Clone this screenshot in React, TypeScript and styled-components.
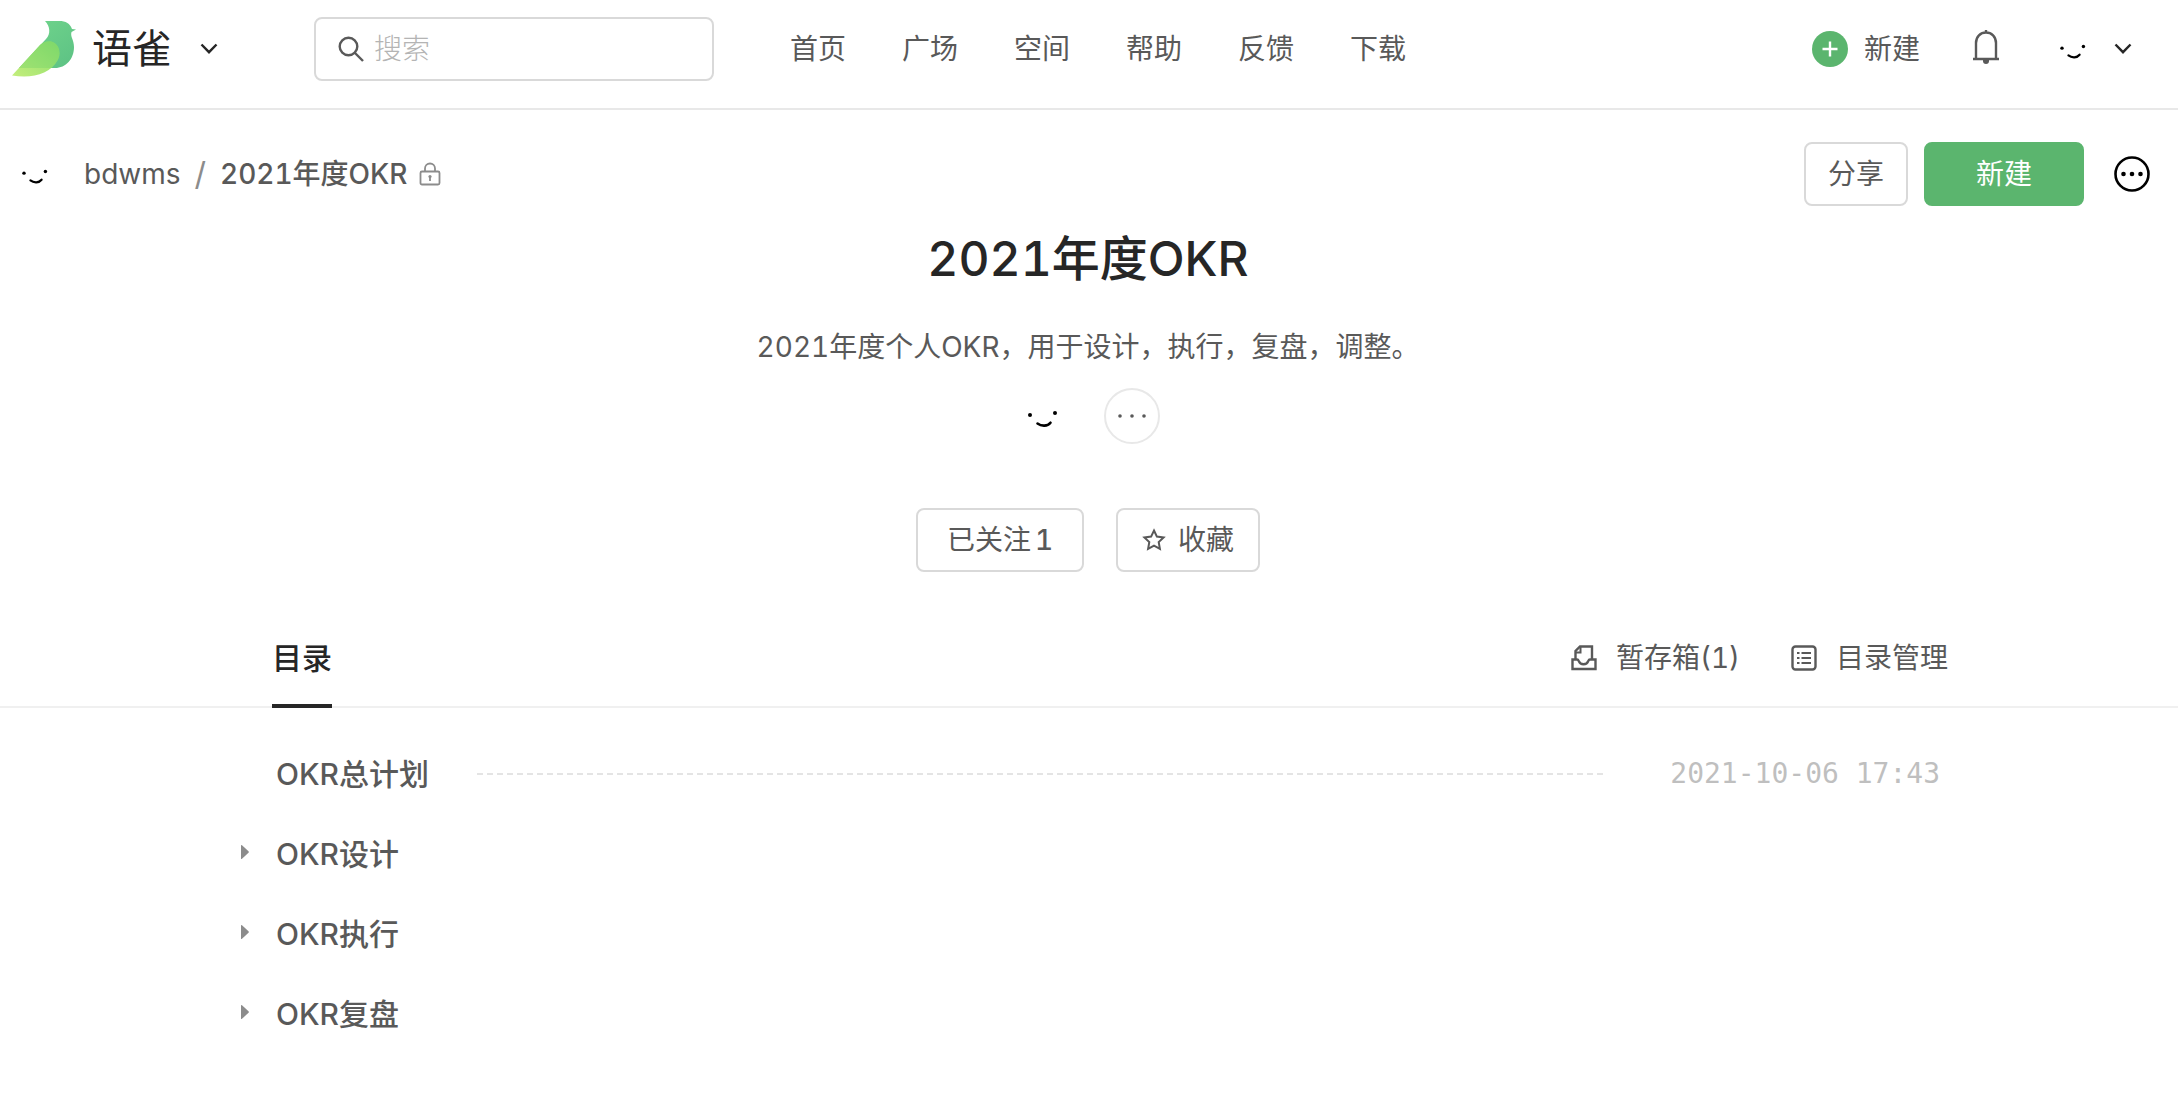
import React from 'react';
import styled, { createGlobalStyle, css } from 'styled-components';

const GlobalStyle = createGlobalStyle`
  *, *::before, *::after { box-sizing: border-box; }
  body {
    margin: 0;
    background: #fff;
    color: #595959;
    font-family: Inter, "Noto Sans CJK SC", sans-serif;
    font-size: 28px;
    font-variant-numeric: tabular-nums;
    line-height: 40px;
  }
  a { color: inherit; text-decoration: none; }
  button, input { font: inherit; color: inherit; }
  svg { display: block; flex: none; }
`;

const Header = styled.header`
  display: flex;
  align-items: center;
  padding: 17px 46px 27px 12px;
  border-bottom: 2px solid #e8e8e8;
`;

const IconButton = styled.button`
  display: flex;
  align-items: center;
  padding: 0;
  border: 0;
  background: none;
  cursor: pointer;
`;

const Brand = styled.a`
  display: flex;
  align-items: center;
  gap: 16px;
  margin-right: 28px;
  color: #262626;
  font-size: 40px;
  font-weight: 400;
`;

const SearchBox = styled.label`
  display: flex;
  align-items: center;
  gap: 10px;
  width: 400px;
  height: 64px;
  margin-left: 96px;
  padding: 0 22px;
  border: 2px solid #d9d9d9;
  border-radius: 8px;
`;

const SearchInput = styled.input`
  flex: 1;
  min-width: 0;
  padding: 0;
  border: 0;
  outline: 0;
  background: none;
  font-weight: 300;
  &::placeholder { color: #b4b4b4; opacity: 1; }
`;

const Nav = styled.nav`
  display: flex;
  gap: 56px;
  margin-left: 76px;
`;

const HeaderTools = styled.div`
  display: flex;
  align-items: center;
  margin-left: auto;
`;

const CreateMenu = styled(IconButton)`
  gap: 16px;
  margin-right: 52px;
`;

const BellButton = styled(IconButton)`
  padding-bottom: 4px;
`;

const UserMenu = styled(IconButton)`
  gap: 16px;
  margin-left: 50px;
`;

const BookBar = styled.div`
  display: flex;
  align-items: center;
  padding: 32px 28px 0 12px;
`;

const Breadcrumb = styled.nav`
  display: flex;
  align-items: center;
`;

const Owner = styled.a`
  display: flex;
  align-items: center;
  gap: 24px;
`;

const Slash = styled.span`
  margin: 0 14px;
  color: #8c8c8c;
  font-size: 32px;
`;

const BookName = styled.a`
  margin-right: 12px;
  font-weight: 500;
`;

const BookActions = styled.div`
  display: flex;
  align-items: center;
  gap: 16px;
  margin-left: auto;
`;

const Button = styled.button<{ $width: number; $primary?: boolean }>`
  display: flex;
  align-items: center;
  justify-content: center;
  gap: 12px;
  width: ${(p) => p.$width}px;
  height: 64px;
  padding: 0;
  border: 2px solid #d9d9d9;
  border-radius: 8px;
  background: #fff;
  cursor: pointer;
  ${(p) =>
    p.$primary &&
    css`
      border-color: #5bb56e;
      background: #5bb56e;
      color: #fff;
    `}
`;

const Count = styled.span`
  margin-left: -8px;
  font-weight: 500;
`;

const MoreButton = styled(IconButton)`
  margin-left: 14px;
`;

const Intro = styled.section`
  display: flex;
  flex-direction: column;
  align-items: center;
  padding-right: 2px;
`;

const Title = styled.h1`
  margin: 20px 0 0;
  color: #262626;
  font-size: 48px;
  font-weight: 500;
  line-height: 66px;
`;

const Description = styled.p`
  margin: 35px 0 0;
`;

const Members = styled.div`
  display: flex;
  gap: 32px;
  margin-top: 21px;
`;

const MembersMore = styled(IconButton)`
  justify-content: center;
  width: 56px;
  height: 56px;
  border: 2px solid #e8e8e8;
  border-radius: 50%;
`;

const IntroActions = styled.div`
  display: flex;
  gap: 32px;
  margin-top: 64px;
`;

const TabBar = styled.div`
  margin-top: 36px;
  border-bottom: 2px solid #f0f0f0;
`;

const Container = styled.div`
  display: flex;
  align-items: flex-end;
  justify-content: space-between;
  width: calc(100% - 48px);
  max-width: 1718px;
  margin: 0 auto;
  padding-left: 42px;
`;

const Tab = styled.a`
  margin-bottom: -2px;
  padding: 30px 0 26px;
  border-bottom: 4px solid #262626;
  color: #262626;
  font-size: 30px;
  font-weight: 500;
`;

const TabTools = styled.div`
  display: flex;
  gap: 50px;
  padding-bottom: 28px;
`;

const ToolLink = styled.a`
  display: flex;
  align-items: center;
  gap: 18px;
`;

const Toc = styled.ul`
  width: calc(100% - 48px);
  max-width: 1718px;
  margin: 26px auto 0;
  padding: 0 8px 0 10px;
  list-style: none;
`;

const TocRow = styled.li`
  display: flex;
  align-items: center;
  height: 80px;
  font-size: 30px;
  font-weight: 500;
`;

const ArrowSlot = styled.button`
  display: flex;
  align-items: center;
  width: 36px;
  height: 40px;
  padding: 0 0 4px;
  border: 0;
  background: none;
`;

const Spacer = styled.span`
  width: 36px;
`;

const Leader = styled.span`
  flex: 1;
  height: 2px;
  margin: 0 64px 0 48px;
  background: repeating-linear-gradient(90deg, #e4e4e4 0 6px, transparent 6px 10px);
`;

const Time = styled.time`
  color: #bfbfbf;
  font-family: "DejaVu Sans Mono", monospace;
  font-size: 28px;
  font-weight: 400;
`;

const Face = ({ size }: { size: number }) => (
  <svg width={size} height={size} viewBox="0 0 56 56" aria-hidden="true">
    <circle cx="14" cy="27" r="2" fill="#000" />
    <circle cx="39" cy="25" r="2" fill="#000" />
    <path d="M21.5 35.5c4 3 10 3 13-.8" fill="none" stroke="#000" strokeWidth="2.6" strokeLinecap="round" />
  </svg>
);

const Chevron = () => (
  <svg width="18" height="12" viewBox="0 0 18 12" fill="none" stroke="#262626" strokeWidth="2.4" aria-hidden="true">
    <path d="M1.5 1.5 9 9.2l7.5-7.7" />
  </svg>
);

const Logo = () => (
  <svg width="64" height="58" viewBox="0 0 64 58" aria-hidden="true">
    <defs>
      <linearGradient id="body" x1="0" y1="0" x2="1" y2="1">
        <stop offset="0" stopColor="#72d68c" />
        <stop offset="1" stopColor="#5cc184" />
      </linearGradient>
      <linearGradient id="wing" x1="1" y1="0" x2="0" y2="1">
        <stop offset="0" stopColor="#86dc6c" />
        <stop offset="1" stopColor="#c4ee7c" />
      </linearGradient>
    </defs>
    <path
      d="M33 1h14c7 0 11 2.500 13 8l4 .5-4.500 2.500c-1.500 4.500 2.500 8 2.500 15 0 12-8 21-19 21H7L34 19c5-5 4-13-1-18Z"
      fill="url(#body)"
    />
    <path d="M0 55.500 28 25c4-4 10-5 14-2.500 6 3.500 7 12 3.500 18C38 54 20 59 0 55.500Z" fill="url(#wing)" />
    <path d="M7 48h33c2-2 3.500-4 5.500-7.500C49 34 48 26 42 22.500 38 20 32 21 28 25Z" fill="#6fd066" opacity=".35" />
  </svg>
);

const SearchIcon = () => (
  <svg width="26" height="26" viewBox="0 0 26 26" fill="none" stroke="#595959" strokeWidth="2.4" aria-hidden="true">
    <circle cx="10.5" cy="10.5" r="8.8" />
    <path d="m17 17 8 8" />
  </svg>
);

const PlusIcon = () => (
  <svg width="36" height="36" viewBox="0 0 36 36" aria-hidden="true">
    <circle cx="18" cy="18" r="18" fill="#5bb56e" />
    <path d="M18 10.5v15M10.5 18h15" stroke="#fff" strokeWidth="2.4" />
  </svg>
);

const BellIcon = () => (
  <svg width="28" height="36" viewBox="0 0 28 36" fill="none" stroke="#595959" strokeWidth="2.4" aria-hidden="true">
    <path d="M4 30V14C4 7.5 8.500 3.500 14 3.500S24 7.500 24 14v16M1 30h26M14 1v3" />
    <path d="M11 31h6v1a3 3 0 0 1-6 0Z" fill="#595959" stroke="none" />
  </svg>
);

const LockIcon = () => (
  <svg width="22" height="24" viewBox="0 0 22 24" fill="none" stroke="#8c8c8c" strokeWidth="1.800" aria-hidden="true">
    <rect x="1.500" y="9.500" width="19" height="13" rx="1.500" />
    <path d="M6 9.500V6.500a5 5 0 0 1 10 0v3M11 14v5" />
    <circle cx="11" cy="14.500" r="1.600" fill="#8c8c8c" stroke="none" />
  </svg>
);

const MoreIcon = () => (
  <svg width="36" height="36" viewBox="0 0 36 36" aria-hidden="true">
    <circle cx="18" cy="18" r="16.500" fill="none" stroke="#000" strokeWidth="2.600" />
    <circle cx="9.500" cy="18" r="2.300" />
    <circle cx="18" cy="18" r="2.300" />
    <circle cx="26.500" cy="18" r="2.300" />
  </svg>
);

const DotsIcon = () => (
  <svg width="32" height="8" viewBox="0 0 32 8" fill="#595959" aria-hidden="true">
    <circle cx="4" cy="4" r="1.800" />
    <circle cx="16" cy="4" r="1.800" />
    <circle cx="28" cy="4" r="1.800" />
  </svg>
);

const StarIcon = () => (
  <svg width="24" height="24" viewBox="0 0 24 24" fill="none" stroke="#595959" strokeWidth="2" aria-hidden="true">
    <path d="m12 2.500 2.900 6.100 6.700.9-4.900 4.600 1.200 6.700L12 17.600l-5.900 3.200 1.200-6.700L2.400 9.500l6.700-.9Z" />
  </svg>
);

const InboxIcon = () => (
  <svg width="28" height="28" viewBox="0 0 28 28" fill="none" stroke="#595959" strokeWidth="2.400" aria-hidden="true">
    <path d="M5.500 15V7l4.500-4.500h12V15" />
    <path d="M5.500 8.500h5V3" strokeWidth="2" />
    <path d="M2.500 15.500h4.500c1 0 1.400.6 1.800 1.600.8 2 2.400 3.200 4.700 3.200s4-1.200 4.700-3.200c.4-1 .8-1.600 1.800-1.600H25.500V25h-23Z" />
  </svg>
);

const ListIcon = () => (
  <svg width="28" height="28" viewBox="0 0 28 28" fill="none" stroke="#595959" strokeWidth="2.400" aria-hidden="true">
    <rect x="2.500" y="2.500" width="23" height="23" rx="3" />
    <path d="M7 9h2.500M7 14h2.500M7 19h2.500M11.500 9H21M11.500 14H21M11.500 19H21" strokeWidth="2" />
  </svg>
);

const ArrowIcon = () => (
  <svg width="10" height="16" viewBox="0 0 10 16" aria-hidden="true">
    <path d="M1 1.500v13q0 1 1 .3l6.500-6q.8-.8 0-1.600L2 1.200q-1-.7-1 .3Z" fill="#8c8c8c" />
  </svg>
);

const navItems = ['首页', '广场', '空间', '帮助', '反馈', '下载'];

const tocItems: { title: string; time?: string }[] = [
  { title: 'OKR总计划', time: '2021-10-06 17:43' },
  { title: 'OKR设计' },
  { title: 'OKR执行' },
  { title: 'OKR复盘' },
];

export default function App() {
  return (
    <>
      <GlobalStyle />
      <Header>
        <Brand href="#">
          <Logo />
          语雀
        </Brand>
        <IconButton aria-label="切换空间">
          <Chevron />
        </IconButton>
        <SearchBox>
          <SearchIcon />
          <SearchInput type="text" placeholder="搜索" aria-label="搜索" />
        </SearchBox>
        <Nav>
          {navItems.map((item) => (
            <a href="#" key={item}>{item}</a>
          ))}
        </Nav>
        <HeaderTools>
          <CreateMenu>
            <PlusIcon />
            新建
          </CreateMenu>
          <BellButton aria-label="通知">
            <BellIcon />
          </BellButton>
          <UserMenu aria-label="个人菜单">
            <Face size={48} />
            <Chevron />
          </UserMenu>
        </HeaderTools>
      </Header>

      <main>
        <BookBar>
          <Breadcrumb>
            <Owner href="#">
              <Face size={48} />
              bdwms
            </Owner>
            <Slash>/</Slash>
            <BookName href="#">2021年度OKR</BookName>
            <LockIcon />
          </Breadcrumb>
          <BookActions>
            <Button $width={104}>分享</Button>
            <Button $width={160} $primary>新建</Button>
            <MoreButton aria-label="更多">
              <MoreIcon />
            </MoreButton>
          </BookActions>
        </BookBar>

        <Intro>
          <Title>2021年度OKR</Title>
          <Description>2021年度个人OKR，用于设计，执行，复盘，调整。</Description>
          <Members>
            <Face size={56} />
            <MembersMore aria-label="更多成员">
              <DotsIcon />
            </MembersMore>
          </Members>
          <IntroActions>
            <Button $width={168}>
              已关注 <Count>1</Count>
            </Button>
            <Button $width={144}>
              <StarIcon />
              收藏
            </Button>
          </IntroActions>
        </Intro>

        <TabBar>
          <Container>
            <Tab href="#">目录</Tab>
            <TabTools>
              <ToolLink href="#">
                <InboxIcon />
                暂存箱(1)
              </ToolLink>
              <ToolLink href="#">
                <ListIcon />
                目录管理
              </ToolLink>
            </TabTools>
          </Container>
        </TabBar>

        <Toc>
          {tocItems.map(({ title, time }) => (
            <TocRow key={title}>
              {time ? (
                <Spacer />
              ) : (
                <ArrowSlot aria-label={`展开${title}`}>
                  <ArrowIcon />
                </ArrowSlot>
              )}
              <a href="#">{title}</a>
              {time && (
                <>
                  <Leader />
                  <Time>{time}</Time>
                </>
              )}
            </TocRow>
          ))}
        </Toc>
      </main>
    </>
  );
}
